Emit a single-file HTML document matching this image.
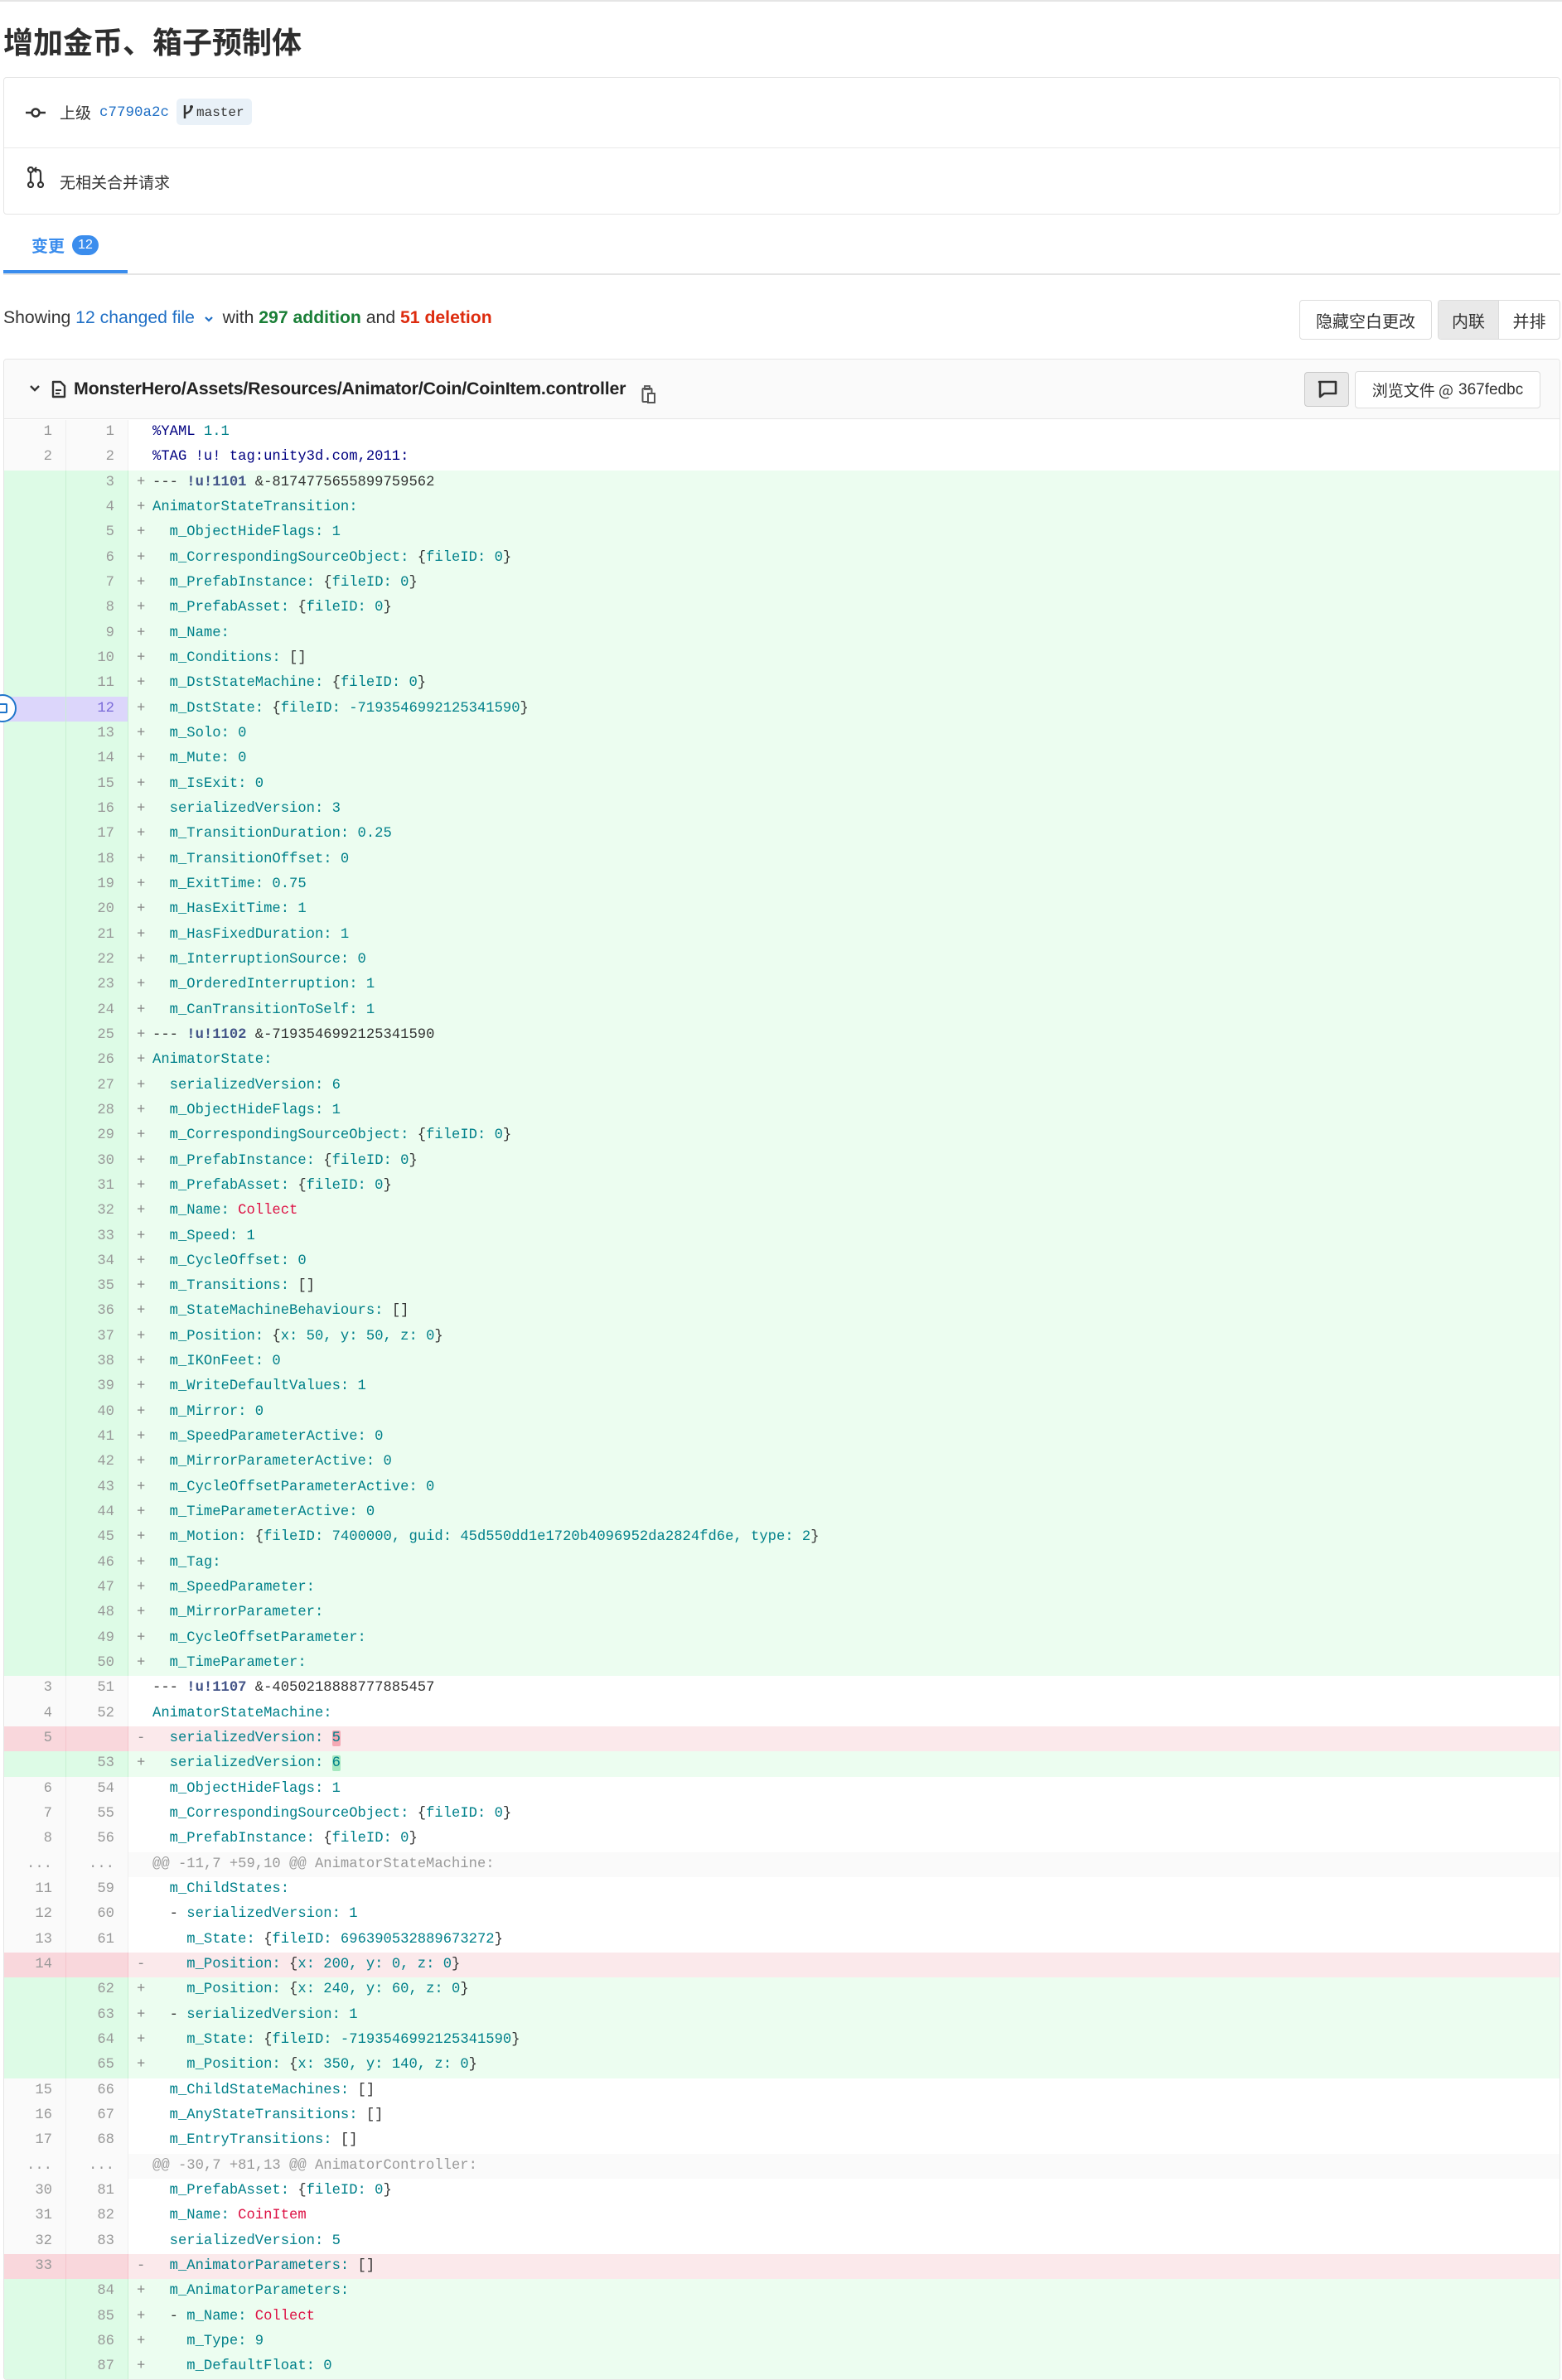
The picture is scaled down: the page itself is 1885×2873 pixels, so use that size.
<!DOCTYPE html>
<html><head><meta charset="utf-8">
<style>
*{box-sizing:border-box;margin:0;padding:0}
body{width:1885px;height:2868px;background:#fff;font-family:"Liberation Sans","Noto Sans CJK SC",sans-serif;color:#303030;position:relative;overflow:hidden}
.abs{position:absolute}
.topline{left:0;top:0;width:1885px;height:2px;background:#e5e5e5}
h1{position:absolute;left:4px;top:26px;font-size:36px;font-weight:bold;color:#2e2e2e;line-height:46px;font-family:"Noto Sans CJK SC",sans-serif}
.info{left:4px;top:93px;width:1879px;height:166px;border:1px solid #e5e5e5;border-radius:4px}
.info .sep{position:absolute;left:0;right:0;top:84px;height:1px;background:#e9e9e9}
.t19{font-size:19px;font-family:"Noto Sans CJK SC",sans-serif}
.mono{font-family:"Liberation Mono",monospace}
.tabline{left:4px;top:330px;width:1879px;height:2px;background:#e5e5e5}
.tabu{left:4px;top:326px;width:150px;height:4px;background:#3b8ded}
.btn{border:1px solid #dcdcdc;border-radius:4px;background:#fff;font-size:20px;font-family:"Noto Sans CJK SC",sans-serif;color:#333;display:flex;align-items:center;justify-content:center}
.file{left:4px;top:433px;width:1879px;height:2440px;border:1px solid #e5e5e5;border-radius:4px;overflow:hidden}
.fh{position:absolute;left:0;top:0;right:0;height:72px;background:#fafafa;border-bottom:1px solid #e5e5e5}
.rows{position:absolute;left:0;top:73px;right:0}
.r{height:30.33px;line-height:30.33px;display:flex;font-family:"Liberation Mono",monospace;font-size:17.2px;white-space:pre;color:#00808a}
.o,.n{width:75px;flex:none;text-align:right;color:#999;background:#fafafa;border-right:1px solid #eee;padding-right:16px}
.m{width:29px;flex:none;padding-left:10px;color:#888}
.c{flex:1}
.a{background:#ecfdf0}.a .o,.a .n{background:#ddfbe6;border-right-color:#c7f0d2}
.d{background:#fbe9eb}.d .o,.d .n{background:#f9d7dc;border-right-color:#f3c4cb}
.h{background:#fafafa}.h .o,.h .n{background:#fafafa}.h .c{color:#999}
.sel .o,.sel .n{background:#dcd6fb;color:#7a6ad8}
.p{color:#333}.s{color:#dd1144}.b{color:#445588;font-weight:bold}.v{color:#000080}
.hd{background:#f5a8b4;border-radius:2px}.ha{background:#a6e8c0;border-radius:2px}
</style></head><body>
<div class="abs topline"></div>
<h1>增加金币、箱子预制体</h1>

<div class="abs info">
  <div class="sep"></div>
  <svg class="abs" style="left:25px;top:34px" width="26" height="16" viewBox="0 0 26 16"><line x1="1" y1="8" x2="8" y2="8" stroke="#333" stroke-width="2.5"/><line x1="18" y1="8" x2="25" y2="8" stroke="#333" stroke-width="2.5"/><circle cx="13" cy="8" r="4.5" fill="none" stroke="#333" stroke-width="2.5"/></svg>
  <div class="abs t19" style="left:67px;top:28px;line-height:28px;color:#333">上级</div>
  <div class="abs mono" style="left:115px;top:28px;line-height:28px;font-size:17.5px;color:#1f6fc5">c7790a2c</div>
  <div class="abs" style="left:208px;top:25px;width:91px;height:32px;background:#e9f1f8;border-radius:5px"></div>
  <svg class="abs" style="left:215px;top:32px" width="14" height="18" viewBox="0 0 14 18"><line x1="3" y1="1" x2="3" y2="17" stroke="#333" stroke-width="2.5"/><path d="M3 11 C9 10 11 7 11 2" fill="none" stroke="#333" stroke-width="2.5"/><circle cx="11" cy="3" r="2" fill="#333"/></svg>
  <div class="abs mono" style="left:232px;top:27px;line-height:30px;font-size:16px;color:#333">master</div>
  <svg class="abs" style="left:27px;top:107px" width="22" height="26" viewBox="0 0 22 26"><circle cx="5" cy="4" r="3" fill="none" stroke="#333" stroke-width="2.2"/><circle cx="5" cy="22" r="3" fill="none" stroke="#333" stroke-width="2.2"/><circle cx="17" cy="22" r="3" fill="none" stroke="#333" stroke-width="2.2"/><line x1="5" y1="7" x2="5" y2="19" stroke="#333" stroke-width="2.2"/><path d="M17 19 V8 Q17 4 13 4 H10" fill="none" stroke="#333" stroke-width="2.2"/><path d="M12 1 L9 4 L12 7" fill="none" stroke="#333" stroke-width="2"/></svg>
  <div class="abs t19" style="left:67px;top:112px;line-height:28px;color:#333">无相关合并请求</div>
</div>

<div class="abs" style="left:38px;top:282px;font-size:20px;font-weight:bold;color:#3b8ded;line-height:28px;font-family:'Noto Sans CJK SC',sans-serif">变更</div>
<div class="abs" style="left:87px;top:284px;width:32px;height:24px;border-radius:12px;background:#3b8ded;color:#fff;font-size:16px;text-align:center;line-height:24px">12</div>
<div class="abs tabline"></div>
<div class="abs tabu"></div>

<div class="abs" style="left:4px;top:370px;font-size:21.2px;line-height:28px;color:#333;white-space:nowrap">Showing <span style="color:#1f6fc5">12 changed file</span> <svg width="14" height="10" viewBox="0 0 14 10" style="margin:0 4px"><path d="M3 3 L7 7 L11 3" fill="none" stroke="#1f6fc5" stroke-width="2.2"/></svg> with <b style="color:#1a7f37">297 addition</b> and <b style="color:#dd2b0e">51 deletion</b></div>

<div class="abs btn" style="left:1568px;top:362px;width:160px;height:48px">隐藏空白更改</div>
<div class="abs btn" style="left:1735px;top:362px;width:148px;height:48px;justify-content:flex-start;overflow:hidden">
  <div style="width:74px;height:100%;background:#e9e9e9;display:flex;align-items:center;justify-content:center;border-right:1px solid #dcdcdc">内联</div>
  <div style="width:74px;display:flex;align-items:center;justify-content:center">并排</div>
</div>

<div class="abs file">
  <div class="fh">
    <svg class="abs" style="left:30px;top:30px" width="14" height="10" viewBox="0 0 14 10"><path d="M2 2 L7 7 L12 2" fill="none" stroke="#333" stroke-width="2.4"/></svg>
    <svg class="abs" style="left:57px;top:25px" width="18" height="22" viewBox="0 0 18 22"><path d="M2 2 H11 L16 7 V20 H2 Z" fill="none" stroke="#333" stroke-width="2.4" stroke-linejoin="round"/><line x1="5" y1="12" x2="12" y2="12" stroke="#333" stroke-width="2"/><line x1="5" y1="16" x2="10" y2="16" stroke="#333" stroke-width="2"/></svg>
    <div class="abs" style="left:84px;top:21px;font-size:21.4px;font-weight:bold;line-height:28px;color:#222;white-space:nowrap;letter-spacing:-0.2px">MonsterHero/Assets/Resources/Animator/Coin/CoinItem.controller</div>
    <svg class="abs" style="left:769px;top:30px" width="18" height="24" viewBox="0 0 18 24"><rect x="1.5" y="5" width="11" height="16" rx="1" fill="none" stroke="#555" stroke-width="2"/><rect x="8" y="11" width="8" height="11" fill="#fff" stroke="#555" stroke-width="2"/><rect x="4" y="2" width="6" height="4" fill="none" stroke="#555" stroke-width="1.8"/></svg>
    <div class="abs" style="left:1569px;top:15px;width:54px;height:42px;background:#e9e9e9;border:1px solid #c8c8c8;border-radius:4px"></div>
    <svg class="abs" style="left:1585px;top:25px" width="24" height="22" viewBox="0 0 24 22"><path d="M2 2 H22 V16 H8 L3 20 V2 Z" fill="none" stroke="#333" stroke-width="2.6" stroke-linejoin="round"/></svg>
    <div class="abs btn" style="left:1630px;top:14px;width:224px;height:45px;font-size:19px">浏览文件 @ <span style="font-family:'Liberation Sans',sans-serif;margin-left:6px">367fedbc</span></div>
  </div>
  <div class="rows">
<div class="r"><span class="o">1</span><span class="n">1</span><span class="m"> </span><span class="c"><span class="v">%YAML</span> 1.1</span></div>
<div class="r"><span class="o">2</span><span class="n">2</span><span class="m"> </span><span class="c"><span class="v">%TAG !u! tag:unity3d.com,2011:</span></span></div>
<div class="r a"><span class="o"></span><span class="n">3</span><span class="m">+</span><span class="c"><span class="p">--- </span><span class="b">!u!1101</span><span class="p"> &amp;-8174775655899759562</span></span></div>
<div class="r a"><span class="o"></span><span class="n">4</span><span class="m">+</span><span class="c">AnimatorStateTransition:</span></div>
<div class="r a"><span class="o"></span><span class="n">5</span><span class="m">+</span><span class="c">  m_ObjectHideFlags: 1</span></div>
<div class="r a"><span class="o"></span><span class="n">6</span><span class="m">+</span><span class="c">  m_CorrespondingSourceObject: <span class="p">{</span>fileID: 0<span class="p">}</span></span></div>
<div class="r a"><span class="o"></span><span class="n">7</span><span class="m">+</span><span class="c">  m_PrefabInstance: <span class="p">{</span>fileID: 0<span class="p">}</span></span></div>
<div class="r a"><span class="o"></span><span class="n">8</span><span class="m">+</span><span class="c">  m_PrefabAsset: <span class="p">{</span>fileID: 0<span class="p">}</span></span></div>
<div class="r a"><span class="o"></span><span class="n">9</span><span class="m">+</span><span class="c">  m_Name:</span></div>
<div class="r a"><span class="o"></span><span class="n">10</span><span class="m">+</span><span class="c">  m_Conditions: <span class="p">[]</span></span></div>
<div class="r a"><span class="o"></span><span class="n">11</span><span class="m">+</span><span class="c">  m_DstStateMachine: <span class="p">{</span>fileID: 0<span class="p">}</span></span></div>
<div class="r a sel"><span class="o"></span><span class="n">12</span><span class="m">+</span><span class="c">  m_DstState: <span class="p">{</span>fileID: -7193546992125341590<span class="p">}</span></span></div>
<div class="r a"><span class="o"></span><span class="n">13</span><span class="m">+</span><span class="c">  m_Solo: 0</span></div>
<div class="r a"><span class="o"></span><span class="n">14</span><span class="m">+</span><span class="c">  m_Mute: 0</span></div>
<div class="r a"><span class="o"></span><span class="n">15</span><span class="m">+</span><span class="c">  m_IsExit: 0</span></div>
<div class="r a"><span class="o"></span><span class="n">16</span><span class="m">+</span><span class="c">  serializedVersion: 3</span></div>
<div class="r a"><span class="o"></span><span class="n">17</span><span class="m">+</span><span class="c">  m_TransitionDuration: 0.25</span></div>
<div class="r a"><span class="o"></span><span class="n">18</span><span class="m">+</span><span class="c">  m_TransitionOffset: 0</span></div>
<div class="r a"><span class="o"></span><span class="n">19</span><span class="m">+</span><span class="c">  m_ExitTime: 0.75</span></div>
<div class="r a"><span class="o"></span><span class="n">20</span><span class="m">+</span><span class="c">  m_HasExitTime: 1</span></div>
<div class="r a"><span class="o"></span><span class="n">21</span><span class="m">+</span><span class="c">  m_HasFixedDuration: 1</span></div>
<div class="r a"><span class="o"></span><span class="n">22</span><span class="m">+</span><span class="c">  m_InterruptionSource: 0</span></div>
<div class="r a"><span class="o"></span><span class="n">23</span><span class="m">+</span><span class="c">  m_OrderedInterruption: 1</span></div>
<div class="r a"><span class="o"></span><span class="n">24</span><span class="m">+</span><span class="c">  m_CanTransitionToSelf: 1</span></div>
<div class="r a"><span class="o"></span><span class="n">25</span><span class="m">+</span><span class="c"><span class="p">--- </span><span class="b">!u!1102</span><span class="p"> &amp;-7193546992125341590</span></span></div>
<div class="r a"><span class="o"></span><span class="n">26</span><span class="m">+</span><span class="c">AnimatorState:</span></div>
<div class="r a"><span class="o"></span><span class="n">27</span><span class="m">+</span><span class="c">  serializedVersion: 6</span></div>
<div class="r a"><span class="o"></span><span class="n">28</span><span class="m">+</span><span class="c">  m_ObjectHideFlags: 1</span></div>
<div class="r a"><span class="o"></span><span class="n">29</span><span class="m">+</span><span class="c">  m_CorrespondingSourceObject: <span class="p">{</span>fileID: 0<span class="p">}</span></span></div>
<div class="r a"><span class="o"></span><span class="n">30</span><span class="m">+</span><span class="c">  m_PrefabInstance: <span class="p">{</span>fileID: 0<span class="p">}</span></span></div>
<div class="r a"><span class="o"></span><span class="n">31</span><span class="m">+</span><span class="c">  m_PrefabAsset: <span class="p">{</span>fileID: 0<span class="p">}</span></span></div>
<div class="r a"><span class="o"></span><span class="n">32</span><span class="m">+</span><span class="c">  m_Name: <span class="s">Collect</span></span></div>
<div class="r a"><span class="o"></span><span class="n">33</span><span class="m">+</span><span class="c">  m_Speed: 1</span></div>
<div class="r a"><span class="o"></span><span class="n">34</span><span class="m">+</span><span class="c">  m_CycleOffset: 0</span></div>
<div class="r a"><span class="o"></span><span class="n">35</span><span class="m">+</span><span class="c">  m_Transitions: <span class="p">[]</span></span></div>
<div class="r a"><span class="o"></span><span class="n">36</span><span class="m">+</span><span class="c">  m_StateMachineBehaviours: <span class="p">[]</span></span></div>
<div class="r a"><span class="o"></span><span class="n">37</span><span class="m">+</span><span class="c">  m_Position: <span class="p">{</span>x: 50, y: 50, z: 0<span class="p">}</span></span></div>
<div class="r a"><span class="o"></span><span class="n">38</span><span class="m">+</span><span class="c">  m_IKOnFeet: 0</span></div>
<div class="r a"><span class="o"></span><span class="n">39</span><span class="m">+</span><span class="c">  m_WriteDefaultValues: 1</span></div>
<div class="r a"><span class="o"></span><span class="n">40</span><span class="m">+</span><span class="c">  m_Mirror: 0</span></div>
<div class="r a"><span class="o"></span><span class="n">41</span><span class="m">+</span><span class="c">  m_SpeedParameterActive: 0</span></div>
<div class="r a"><span class="o"></span><span class="n">42</span><span class="m">+</span><span class="c">  m_MirrorParameterActive: 0</span></div>
<div class="r a"><span class="o"></span><span class="n">43</span><span class="m">+</span><span class="c">  m_CycleOffsetParameterActive: 0</span></div>
<div class="r a"><span class="o"></span><span class="n">44</span><span class="m">+</span><span class="c">  m_TimeParameterActive: 0</span></div>
<div class="r a"><span class="o"></span><span class="n">45</span><span class="m">+</span><span class="c">  m_Motion: <span class="p">{</span>fileID: 7400000, guid: 45d550dd1e1720b4096952da2824fd6e, type: 2<span class="p">}</span></span></div>
<div class="r a"><span class="o"></span><span class="n">46</span><span class="m">+</span><span class="c">  m_Tag:</span></div>
<div class="r a"><span class="o"></span><span class="n">47</span><span class="m">+</span><span class="c">  m_SpeedParameter:</span></div>
<div class="r a"><span class="o"></span><span class="n">48</span><span class="m">+</span><span class="c">  m_MirrorParameter:</span></div>
<div class="r a"><span class="o"></span><span class="n">49</span><span class="m">+</span><span class="c">  m_CycleOffsetParameter:</span></div>
<div class="r a"><span class="o"></span><span class="n">50</span><span class="m">+</span><span class="c">  m_TimeParameter:</span></div>
<div class="r"><span class="o">3</span><span class="n">51</span><span class="m"> </span><span class="c"><span class="p">--- </span><span class="b">!u!1107</span><span class="p"> &amp;-4050218888777885457</span></span></div>
<div class="r"><span class="o">4</span><span class="n">52</span><span class="m"> </span><span class="c">AnimatorStateMachine:</span></div>
<div class="r d"><span class="o">5</span><span class="n"></span><span class="m">-</span><span class="c">  serializedVersion: <span class="hd">5</span></span></div>
<div class="r a"><span class="o"></span><span class="n">53</span><span class="m">+</span><span class="c">  serializedVersion: <span class="ha">6</span></span></div>
<div class="r"><span class="o">6</span><span class="n">54</span><span class="m"> </span><span class="c">  m_ObjectHideFlags: 1</span></div>
<div class="r"><span class="o">7</span><span class="n">55</span><span class="m"> </span><span class="c">  m_CorrespondingSourceObject: <span class="p">{</span>fileID: 0<span class="p">}</span></span></div>
<div class="r"><span class="o">8</span><span class="n">56</span><span class="m"> </span><span class="c">  m_PrefabInstance: <span class="p">{</span>fileID: 0<span class="p">}</span></span></div>
<div class="r h"><span class="o">...</span><span class="n">...</span><span class="m"> </span><span class="c">@@ -11,7 +59,10 @@ AnimatorStateMachine:</span></div>
<div class="r"><span class="o">11</span><span class="n">59</span><span class="m"> </span><span class="c">  m_ChildStates:</span></div>
<div class="r"><span class="o">12</span><span class="n">60</span><span class="m"> </span><span class="c">  <span class="p">-</span> serializedVersion: 1</span></div>
<div class="r"><span class="o">13</span><span class="n">61</span><span class="m"> </span><span class="c">    m_State: <span class="p">{</span>fileID: 696390532889673272<span class="p">}</span></span></div>
<div class="r d"><span class="o">14</span><span class="n"></span><span class="m">-</span><span class="c">    m_Position: <span class="p">{</span>x: 200, y: 0, z: 0<span class="p">}</span></span></div>
<div class="r a"><span class="o"></span><span class="n">62</span><span class="m">+</span><span class="c">    m_Position: <span class="p">{</span>x: 240, y: 60, z: 0<span class="p">}</span></span></div>
<div class="r a"><span class="o"></span><span class="n">63</span><span class="m">+</span><span class="c">  <span class="p">-</span> serializedVersion: 1</span></div>
<div class="r a"><span class="o"></span><span class="n">64</span><span class="m">+</span><span class="c">    m_State: <span class="p">{</span>fileID: -7193546992125341590<span class="p">}</span></span></div>
<div class="r a"><span class="o"></span><span class="n">65</span><span class="m">+</span><span class="c">    m_Position: <span class="p">{</span>x: 350, y: 140, z: 0<span class="p">}</span></span></div>
<div class="r"><span class="o">15</span><span class="n">66</span><span class="m"> </span><span class="c">  m_ChildStateMachines: <span class="p">[]</span></span></div>
<div class="r"><span class="o">16</span><span class="n">67</span><span class="m"> </span><span class="c">  m_AnyStateTransitions: <span class="p">[]</span></span></div>
<div class="r"><span class="o">17</span><span class="n">68</span><span class="m"> </span><span class="c">  m_EntryTransitions: <span class="p">[]</span></span></div>
<div class="r h"><span class="o">...</span><span class="n">...</span><span class="m"> </span><span class="c">@@ -30,7 +81,13 @@ AnimatorController:</span></div>
<div class="r"><span class="o">30</span><span class="n">81</span><span class="m"> </span><span class="c">  m_PrefabAsset: <span class="p">{</span>fileID: 0<span class="p">}</span></span></div>
<div class="r"><span class="o">31</span><span class="n">82</span><span class="m"> </span><span class="c">  m_Name: <span class="s">CoinItem</span></span></div>
<div class="r"><span class="o">32</span><span class="n">83</span><span class="m"> </span><span class="c">  serializedVersion: 5</span></div>
<div class="r d"><span class="o">33</span><span class="n"></span><span class="m">-</span><span class="c">  m_AnimatorParameters: <span class="p">[]</span></span></div>
<div class="r a"><span class="o"></span><span class="n">84</span><span class="m">+</span><span class="c">  m_AnimatorParameters:</span></div>
<div class="r a"><span class="o"></span><span class="n">85</span><span class="m">+</span><span class="c">  <span class="p">-</span> m_Name: <span class="s">Collect</span></span></div>
<div class="r a"><span class="o"></span><span class="n">86</span><span class="m">+</span><span class="c">    m_Type: 9</span></div>
<div class="r a"><span class="o"></span><span class="n">87</span><span class="m">+</span><span class="c">    m_DefaultFloat: 0</span></div>
  </div>
</div>
<div class="abs" style="left:-14px;top:838px;width:34px;height:34px;border-radius:50%;background:#fff;border:2px solid #1f75cb"></div>
<div class="abs" style="left:0px;top:849px;width:9px;height:12px;border:2px solid #1f75cb;border-left:none;border-radius:0 2px 2px 0"></div>
</body></html>
